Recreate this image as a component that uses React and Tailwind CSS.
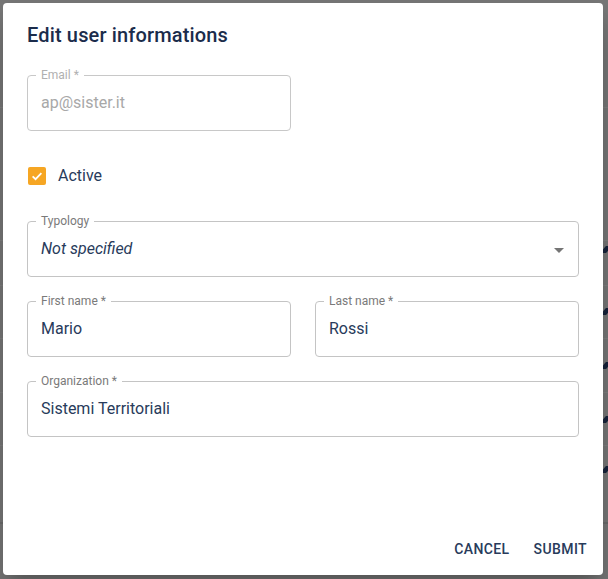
import React from "react";

function Field({ label, value, className = "", italic = false, disabled = false, select = false }) {
  return (
    <div className={`relative h-[56px] rounded-[4px] border ${disabled ? "border-[#c8c8c8]" : "border-[#c4c4c4]"} ${className}`}>
      <span
        className={`absolute left-[8px] top-[-9px] bg-white px-[5px] text-[12px] leading-[16px] ${disabled ? "text-[#b0b0b0]" : "text-[#7a7a7a]"}`}
      >
        {label}
      </span>
      <div
        className={`flex h-full items-center pl-[13px] text-[16px] ${italic ? "italic" : ""} ${disabled ? "text-[#a8a8a8]" : "text-[#283b5b]"}`}
      >
        {value}
      </div>
      {select && (
        <svg className="absolute right-[7px] top-[16px]" width="24" height="24" viewBox="0 0 24 24">
          <path d="M7 10l5 5 5-5z" fill="#757575" />
        </svg>
      )}
    </div>
  );
}

export default function App() {
  return (
    <div
      className="relative h-[579px] w-[608px] overflow-hidden bg-[#767676]"
      style={{ fontFamily: "Roboto, 'Liberation Sans', sans-serif" }}
    >
      {/* underlying page hints */}
      <div className="absolute left-0 top-[107px] h-px w-[608px] bg-[#7e7e7e]" />
      <div className="absolute left-0 top-[240px] h-px w-[608px] bg-[#7e7e7e]" />
      <div className="absolute left-0 top-[285px] h-px w-[608px] bg-[#7e7e7e]" />
      <div className="absolute left-0 top-[338px] h-px w-[608px] bg-[#7e7e7e]" />
      <div className="absolute left-0 top-[392px] h-px w-[608px] bg-[#7e7e7e]" />
      <div className="absolute left-0 top-[445px] h-px w-[608px] bg-[#7e7e7e]" />
      <div className="absolute left-0 top-[522px] h-[2px] w-[608px] bg-[#6a6a6a]" />
      {[246, 308, 362, 416, 466].map((t) => (
        <div key={t} className="absolute left-[603px] h-[7px] w-[6px] -skew-x-[40deg] bg-[#16223a]" style={{ top: t }} />
      ))}

      {/* dialog */}
      <div className="absolute left-[3px] top-[3px] flex h-[572px] w-[600px] flex-col rounded-[4px] bg-white shadow-[0_11px_15px_-7px_rgba(0,0,0,0.2),0_24px_38px_3px_rgba(0,0,0,0.14)]">
        <h2 className="px-[24px] pt-[16px] text-[20px] font-medium leading-[32px] tracking-[0.15px] text-[#1b2c4b]">
          Edit user informations
        </h2>
        <div className="flex flex-col px-[24px] pt-[24px]">
          <Field label="Email *" value="ap@sister.it" disabled className="w-[264px]" />
          <div className="mt-[24px] flex h-[42px] items-center">
            <div className="ml-[1px] flex h-[18px] w-[18px] items-center justify-center rounded-[2px] bg-[#f6a623]">
              <svg width="14" height="14" viewBox="0 0 24 24">
                <path d="M4.5 12.5l5 5L19.5 7" fill="none" stroke="white" strokeWidth="3" />
              </svg>
            </div>
            <span className="ml-[12px] text-[16px] text-[#283b5b]">Active</span>
          </div>
          <Field label="Typology" value="Not specified" italic select className="mt-[24px]" />
          <div className="mt-[24px] flex gap-[24px]">
            <Field label="First name *" value="Mario" className="flex-1" />
            <Field label="Last name *" value="Rossi" className="flex-1" />
          </div>
          <Field label="Organization *" value="Sistemi Territoriali" className="mt-[24px]" />
        </div>
        <div className="mt-auto flex justify-end gap-[8px] p-[8px]">
          <button className="h-[36px] px-[8px] text-[14px] font-medium uppercase tracking-[0.4px] text-[#283b5b]">
            Cancel
          </button>
          <button className="h-[36px] px-[8px] text-[14px] font-medium uppercase tracking-[0.4px] text-[#283b5b]">
            Submit
          </button>
        </div>
      </div>
    </div>
  );
}
